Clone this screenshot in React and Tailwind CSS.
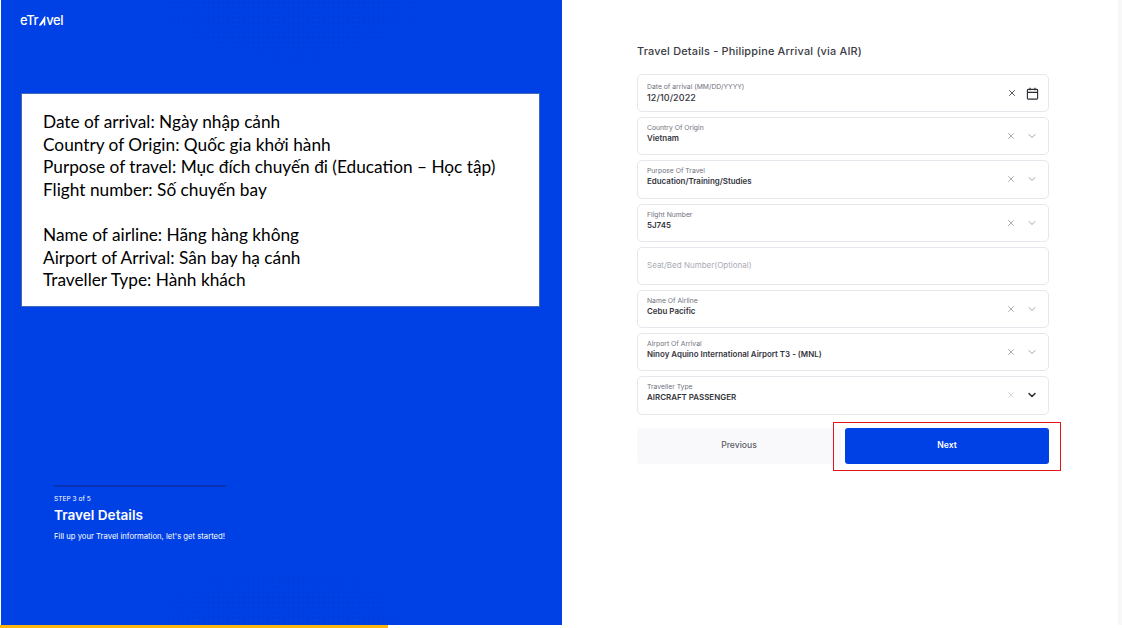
import { X, ChevronDown } from 'lucide-react'

const notes = [
  'Date of arrival: Ngày nhập cảnh',
  'Country of Origin: Quốc gia khởi hành',
  'Purpose of travel: Mục đích chuyến đi (Education – Học tập)',
  'Flight number: Số chuyến bay',
  '',
  'Name of airline: Hãng hàng không',
  'Airport of Arrival: Sân bay hạ cánh',
  'Traveller Type: Hành khách',
]

const fields = [
  { label: 'Date of arrival (MM/DD/YYYY)', value: '12/10/2022', kind: 'date' },
  { label: 'Country Of Origin', value: 'Vietnam' },
  { label: 'Purpose Of Travel', value: 'Education/Training/Studies' },
  { label: 'Flight Number', value: '5J745' },
  { placeholder: 'Seat/Bed Number(Optional)' },
  { label: 'Name Of Airline', value: 'Cebu Pacific' },
  { label: 'Airport Of Arrival', value: 'Ninoy Aquino International Airport T3 - (MNL)' },
  { label: 'Traveller Type', value: 'AIRCRAFT PASSENGER', kind: 'open' },
]

function CalendarIcon() {
  return (
    <svg viewBox="0 0 14 14" fill="none" className="w-[13px] h-[13px] text-[#2b2b33]">
      <rect x="1.5" y="2.5" width="11" height="10.5" rx="1" stroke="currentColor" strokeWidth="1.2" />
      <path d="M1.5 5.8h11M4.3 0.8v2.6M9.7 0.8v2.6" stroke="currentColor" strokeWidth="1.2" />
    </svg>
  )
}

function Field({ field }) {
  if (field.placeholder) {
    return (
      <div className="h-[38.2px] border border-[#e6e7ec] rounded-[5px] pl-[9px] pb-[1px] flex items-center text-[8px] text-[#a9abb5]">
        {field.placeholder}
      </div>
    )
  }

  const isDate = field.kind === 'date'

  return (
    <div className="h-[38.2px] border border-[#e6e7ec] rounded-[5px] pl-[9px] pr-[9px] flex items-center justify-between">
      <div className={`flex flex-col ${isDate ? 'pb-[2px]' : 'pb-[6px]'}`}>
        <span className="text-[6.8px] leading-[10px] text-[#6f717c]">{field.label}</span>
        <span className={isDate
          ? 'text-[9px] leading-[11px] font-medium text-[#33343c] tracking-[0.1px]'
          : 'text-[7.95px] leading-[10px] font-semibold text-[#33343c]'}>
          {field.value}
        </span>
      </div>
      <div className="flex items-center gap-[9px]">
        <X
          strokeWidth={isDate ? 2 : 1.5}
          className={`w-[10px] h-[10px] ${isDate ? 'text-[#33343c]' : field.kind === 'open' ? 'text-[#c4c5cc]' : 'text-[#7d7e87]'}`}
        />
        {isDate ? (
          <CalendarIcon />
        ) : (
          <ChevronDown
            strokeWidth={field.kind === 'open' ? 3 : 1.5}
            className={`w-[12px] h-[12px] mx-[1px] ${field.kind === 'open' ? 'text-[#2b2b33]' : 'text-[#85868f]'}`}
          />
        )}
      </div>
    </div>
  )
}

export default function App() {
  return (
    <div className="w-[1122px] h-[628px] bg-white flex flex-col overflow-hidden font-['Inter',sans-serif]">
      <div className="h-[625px] flex">
        <div className="relative w-[561px] ml-[1px] bg-[#0041e6] flex flex-col justify-between shrink-0">
          {/* faint dot texture, top and bottom of the panel */}
          <div className="absolute left-[120px] top-0 w-[340px] h-[80px] bg-[radial-gradient(#003ddc_1.2px,transparent_1.3px)] bg-[length:5px_5px] [mask-image:radial-gradient(ellipse_at_top,black_30%,transparent_72%)]" />
          <div className="absolute left-[120px] bottom-0 w-[320px] h-[75px] bg-[radial-gradient(#003ddc_1.2px,transparent_1.3px)] bg-[length:5px_5px] [mask-image:radial-gradient(ellipse_at_bottom,black_30%,transparent_72%)]" />

          <div className="relative pl-[19px] pt-[13px] flex items-center text-white text-[13px] font-medium leading-[14px] tracking-[-0.4px]">
            eTr
            <svg viewBox="0 0 8 12" className="w-[8px] h-[11px]">
              <path d="M7.6 0.5V11.5H6V7.5L3 11.5H0.4Z" fill="currentColor" />
            </svg>
            vel
          </div>

          <div className="absolute left-[20px] top-[93px] w-[519px] h-[214px] bg-white border border-[#3f6bb5] pl-[21px] pt-[17px] font-['Lato',sans-serif] text-[17.25px] leading-[22.6px] text-black">
            {notes.map((line, i) => (
              <div key={i} className="h-[22.6px] whitespace-nowrap">{line}</div>
            ))}
          </div>

          <div className="relative pl-[53px] pb-[83px] text-white">
            <div className="w-[172px] h-[2px] bg-[#0a33b4] mb-[7px]" />
            <p className="text-[6.6px] leading-[10px]">STEP 3 of 5</p>
            <h1 className="text-[13.6px] leading-[16px] font-semibold mt-[3px]">Travel Details</h1>
            <p className="text-[7.7px] leading-[10px] mt-[9px] whitespace-nowrap">Fill up your Travel information, let's get started!</p>
          </div>
        </div>

        <div className="flex-1 pl-[75px] pr-[69px] pt-[44px] border-r-4 border-[#f8f8f9]">
          <h2 className="text-[10.9px] leading-[14px] font-medium text-[#3a3b43] tracking-[0.2px] mb-[16px]">
            Travel Details - Philippine Arrival (via AIR)
          </h2>

          <div className="flex flex-col gap-[5px]">
            {fields.map((field, i) => (
              <Field key={i} field={field} />
            ))}
          </div>

          <div className="mt-[13px] flex gap-[4px]">
            <button className="w-[204px] h-[36px] bg-[#f9f9fc] rounded-[3px] text-[8.6px] font-medium text-[#5d5e67]">
              Previous
            </button>
            <div className="relative w-[204px] h-[36px]">
              <button className="w-full h-full bg-[#0041e6] rounded-[3px] text-[8.6px] font-semibold text-white">
                Next
              </button>
              <div className="absolute -left-[12px] -right-[12px] -top-[6px] -bottom-[7px] border border-[#e8121c]" />
            </div>
          </div>
        </div>
      </div>
      <div className="w-[388px] h-[3px] bg-[#ffb612]" />
    </div>
  )
}
